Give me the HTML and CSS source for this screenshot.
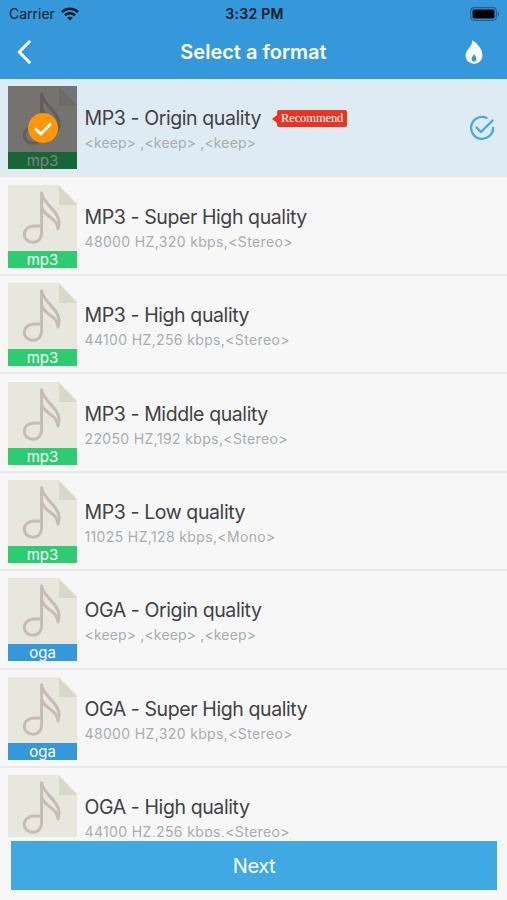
FILE: index.html
```
<!DOCTYPE html>
<html lang="en">
<head>
  <meta charset="UTF-8" />
  <meta name="viewport" content="width=device-width, initial-scale=1.0"/>
  <title>Select a format</title>
  <link rel="stylesheet" href="styles.css">
</head>
<body>
  <!-- shared file icon -->
  <svg class="defs" width="0" height="0">
    <symbol id="file" viewBox="0 0 69 83">
      <path d="M0 0H51L69 18V83H0z" fill="#e8e7de"/>
      <path d="M51 1L69 20H51z" fill="#d8d8ca"/>
      <g fill="none" stroke="#c6bbb7" stroke-width="3" stroke-linecap="round" stroke-linejoin="round">
        <path d="M33.6 8V48C33.6 53.5 30 57.2 25 57.2C19.5 57.2 16.3 53.5 16.3 49.5C16.3 44.5 20.5 41 26 41H33.6"/>
        <path d="M33.6 8C36 20 51 26 51 37C51 40.5 50.5 42 50 44C49 32 37 33 33.6 22"/>
      </g>
    </symbol>
  </svg>

  <div class="screen">
    <header>
      <div class="status-bar">
        <div class="carrier">
          <span>Carrier</span>
          <svg width="18" height="14" viewBox="0 0 18 14">
            <g fill="none" stroke="#0b1a26" stroke-width="2.6">
              <path d="M1 5.1C5.5 .7 12.5 .7 17 5.1"/>
              <path d="M4 8.3C6.8 5.6 11.2 5.6 14 8.3"/>
            </g>
            <path d="M9 13.5L6.2 10.7C7.8 9.3 10.2 9.3 11.8 10.7z" fill="#0b1a26"/>
          </svg>
        </div>
        <span class="time">3:32 PM</span>
        <svg class="battery" width="30" height="14" viewBox="0 0 30 14">
          <rect x=".7" y=".7" width="25.6" height="12.6" rx="3.5" fill="none" stroke="#1f618e" stroke-width="1.2"/>
          <rect x="2.5" y="2.5" width="22" height="9" rx="1.8" fill="#000"/>
          <path d="M27.6 4.7C29.8 5.7 29.8 8.3 27.6 9.3z" fill="#1f618e"/>
        </svg>
      </div>
      <div class="nav-bar">
        <svg class="back" width="14" height="24" viewBox="0 0 14 24">
          <path d="M12.3 1.8L2.2 12L12.3 22.2" fill="none" stroke="#fff" stroke-width="3" stroke-linecap="round" stroke-linejoin="round"/>
        </svg>
        <h1>Select a format</h1>
        <svg class="flame" width="18" height="24" viewBox="0 0 18 24">
          <path d="M7.3 .3C12 3 17.4 9 17.4 15.2C17.4 20.3 13.7 23.7 9 23.7C4.3 23.7 .6 20.3 .6 15.5C.6 9.5 7.6 6.5 7.3 .3z" fill="#fff"/>
          <path d="M9 14C10 15.5 11.4 17 11.4 19C11.4 20.7 10.4 21.6 9 21.6C7.6 21.6 6.6 20.7 6.6 19C6.6 17 8.3 16 9 14z" fill="#3498db"/>
        </svg>
      </div>
    </header>

    <div class="list">
      <div class="row selected">
        <div class="thumb">
          <svg class="file"><use href="#file"/></svg>
          <span class="ext mp3">mp3</span>
          <div class="mask">
            <svg width="30" height="30" viewBox="0 0 30 30">
              <circle cx="15" cy="15" r="15" fill="#ff9708"/>
              <path d="M7 15.5L12.8 21L23 10.5" fill="none" stroke="#fff" stroke-width="3"/>
            </svg>
          </div>
        </div>
        <div class="info">
          <div class="name"><span>MP3 - Origin quality</span><span class="tag">Recommend</span></div>
          <div class="detail keep">&lt;keep&gt; ,&lt;keep&gt; ,&lt;keep&gt;</div>
        </div>
        <svg class="check" width="26" height="26" viewBox="0 0 26 26">
          <g fill="none" stroke="#45a9e2" stroke-width="2.3" stroke-linecap="round" stroke-linejoin="round">
            <path d="M17.5 2.8A11 11 0 1 0 24.1 13"/>
            <path d="M7.5 12.5L12 17L23.5 5.5"/>
          </g>
        </svg>
      </div>
      <div class="row">
        <div class="thumb"><svg class="file"><use href="#file"/></svg><span class="ext mp3">mp3</span></div>
        <div class="info">
          <div class="name">MP3 - Super High quality</div>
          <div class="detail">48000 HZ,320 kbps,&lt;Stereo&gt;</div>
        </div>
      </div>
      <div class="row">
        <div class="thumb"><svg class="file"><use href="#file"/></svg><span class="ext mp3">mp3</span></div>
        <div class="info">
          <div class="name">MP3 - High quality</div>
          <div class="detail">44100 HZ,256 kbps,&lt;Stereo&gt;</div>
        </div>
      </div>
      <div class="row">
        <div class="thumb"><svg class="file"><use href="#file"/></svg><span class="ext mp3">mp3</span></div>
        <div class="info">
          <div class="name">MP3 - Middle quality</div>
          <div class="detail">22050 HZ,192 kbps,&lt;Stereo&gt;</div>
        </div>
      </div>
      <div class="row">
        <div class="thumb"><svg class="file"><use href="#file"/></svg><span class="ext mp3">mp3</span></div>
        <div class="info">
          <div class="name">MP3 - Low quality</div>
          <div class="detail">11025 HZ,128 kbps,&lt;Mono&gt;</div>
        </div>
      </div>
      <div class="row">
        <div class="thumb"><svg class="file"><use href="#file"/></svg><span class="ext oga">oga</span></div>
        <div class="info">
          <div class="name">OGA - Origin quality</div>
          <div class="detail keep">&lt;keep&gt; ,&lt;keep&gt; ,&lt;keep&gt;</div>
        </div>
      </div>
      <div class="row">
        <div class="thumb"><svg class="file"><use href="#file"/></svg><span class="ext oga">oga</span></div>
        <div class="info">
          <div class="name">OGA - Super High quality</div>
          <div class="detail">48000 HZ,320 kbps,&lt;Stereo&gt;</div>
        </div>
      </div>
      <div class="row">
        <div class="thumb"><svg class="file"><use href="#file"/></svg></div>
        <div class="info">
          <div class="name">OGA - High quality</div>
          <div class="detail">44100 HZ,256 kbps,&lt;Stereo&gt;</div>
        </div>
      </div>
    </div>

    <button class="next">Next</button>
  </div>
</body>
</html>
```
FILE: styles.css
```
* {
  box-sizing: border-box;
  margin: 0;
  padding: 0;
}

body {
  font-family: Inter, 'Liberation Sans', sans-serif;
  background-color: #f7f7f7;
  color: #404244;
}

svg {
  display: block;
  flex-shrink: 0;
}

.defs {
  position: absolute;
}

.screen {
  height: 900px;
  display: flex;
  flex-direction: column;
  overflow: hidden;
}

header {
  height: 79px;
  flex-shrink: 0;
  background-color: #3498db;
}

.status-bar {
  height: 27px;
  padding: 0 7px 0 9px;
  display: grid;
  grid-template-columns: 1fr auto 1fr;
  align-items: center;
  font-size: 14px;
  color: #0b1a26;
}

.carrier {
  display: flex;
  align-items: center;
  gap: 6px;
}

.time {
  font-weight: 600;
  letter-spacing: 0.3px;
}

.battery {
  justify-self: end;
}

.nav-bar {
  height: 50px;
  padding: 0 24px 0 17px;
  display: grid;
  grid-template-columns: 1fr auto 1fr;
  align-items: center;
}

h1 {
  font-size: 20px;
  font-weight: 600;
  color: #fff;
  padding-left: 7px;
}

.flame {
  justify-self: end;
}

.list {
  height: 757.5px;
  flex-shrink: 0;
  overflow: hidden;
}

.row {
  height: 98.45px;
  padding: 7px 12px 6px 8px;
  display: flex;
  align-items: center;
  border-bottom: 2px solid #e9e9e9;
}

.selected {
  background-color: #deeaf4;
}

.thumb {
  position: relative;
  width: 69px;
  height: 83px;
  flex-shrink: 0;
}

.file {
  width: 69px;
  height: 83px;
}

.ext {
  position: absolute;
  left: 0;
  bottom: 0;
  width: 100%;
  height: 17px;
  line-height: 17px;
  font-size: 15px;
  text-align: center;
  color: #fff;
}

.mp3 {
  background-color: #2ecc71;
}

.oga {
  background-color: #3498db;
}

.mask {
  position: absolute;
  inset: 0;
  display: flex;
  align-items: center;
  justify-content: center;
  background-color: rgba(0, 0, 0, 0.5);
}

.info {
  flex: 1;
  margin-left: 7.5px;
  padding-top: 4px;
  white-space: nowrap;
}

.name {
  display: flex;
  align-items: center;
  height: 26px;
  font-size: 19.5px;
  letter-spacing: -0.4px;
}

.detail {
  height: 23px;
  line-height: 23px;
  font-size: 14px;
  letter-spacing: 0.36px;
  color: #a9adb0;
}

.keep {
  letter-spacing: 0.15px;
}

.tag {
  position: relative;
  margin-left: 16px;
  width: 70px;
  height: 17px;
  line-height: 17px;
  border-radius: 2px;
  background-color: #e93323;
  color: #fff;
  font-family: 'Liberation Serif', serif;
  font-size: 12.5px;
  letter-spacing: -0.1px;
  text-align: center;
}

.tag::before {
  content: '';
  position: absolute;
  left: -5px;
  top: 5px;
  border: 4px solid transparent;
  border-left: 0;
  border-right: 5px solid #e93323;
}

.next {
  width: 486px;
  height: 49px;
  margin: 4.5px 0 0 11px;
  flex-shrink: 0;
  border: none;
  background-color: #40a9e3;
  color: #fff;
  font-family: inherit;
  font-size: 20px;
  letter-spacing: -0.4px;
}
```
